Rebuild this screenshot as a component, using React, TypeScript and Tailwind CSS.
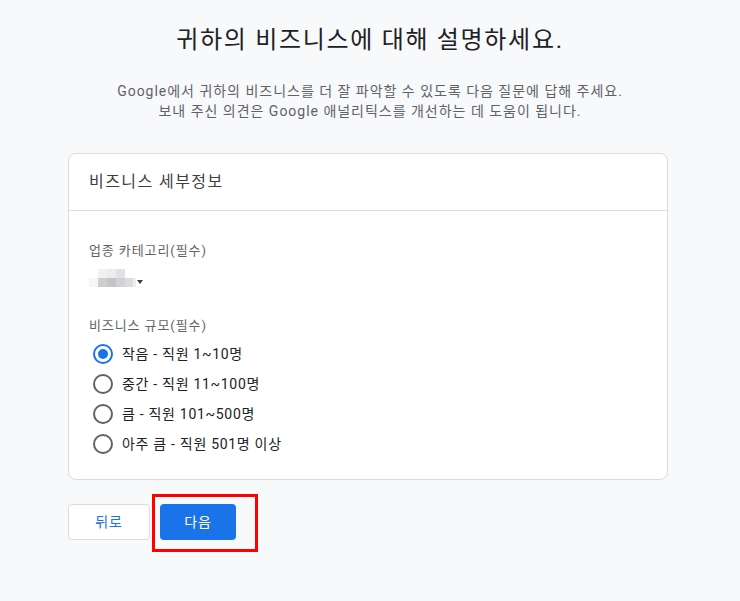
import React from "react";

const options = [
  "작음 - 직원 1~10명",
  "중간 - 직원 11~100명",
  "큼 - 직원 101~500명",
  "아주 큼 - 직원 501명 이상",
];

function Radio({ checked }: { checked: boolean }) {
  return (
    <span
      className={`flex h-[20px] w-[20px] items-center justify-center rounded-full border-2 ${
        checked ? "border-[#1a73e8]" : "border-[#5f6368]"
      }`}
    >
      {checked && <span className="h-[10px] w-[10px] rounded-full bg-[#1a73e8]" />}
    </span>
  );
}

export default function App() {
  return (
    <div
      className="min-h-[601px] w-[740px] bg-[#f8f9fa]"
      style={{ fontFamily: "Roboto, 'Noto Sans CJK KR', 'Noto Sans', sans-serif" }}
    >
      <div className="pt-[22px] text-center">
        <h1 className="text-[24px] leading-[36px] tracking-[0.07em] text-[#202124]">귀하의 비즈니스에 대해 설명하세요.</h1>
        <p className="mt-[23px] text-[14px] leading-[20px] tracking-[0.07em] text-[#5f6368]">
          Google에서 귀하의 비즈니스를 더 잘 파악할 수 있도록 다음 질문에 답해 주세요.
          <br />
          보내 주신 의견은 Google 애널리틱스를 개선하는 데 도움이 됩니다.
        </p>
      </div>

      <div className="mx-[68px] mt-[32px] w-[600px] rounded-[8px] border border-[#dadce0] bg-white">
        <div className="flex h-[57px] items-center border-b border-[#dadce0] px-[20px]">
          <span className="text-[16px] tracking-[0.09em] text-[#3c4043]">비즈니스 세부정보</span>
        </div>
        <div className="px-[20px] pb-[20px] pt-[30px]">
          <div className="text-[13px] leading-[20px] tracking-[0.07em] text-[#5f6368]">업종 카테고리(필수)</div>
          <div className="mt-[8px] flex h-[18px] items-end">
            <div className="flex flex-col">
              <div className="flex">
                <span className="h-[9px] w-[9px] bg-white" />
                <span className="h-[9px] w-[9px] bg-[#f1f1f3]" />
                <span className="h-[9px] w-[9px] bg-[#ececee]" />
                <span className="h-[9px] w-[9px] bg-[#e2e2e6]" />
              </div>
              <div className="flex">
                <span className="h-[9px] w-[9px] bg-[#f8f6f4]" />
                <span className="h-[9px] w-[9px] bg-[#cfcfd2]" />
                <span className="h-[9px] w-[9px] bg-[#c5c5c8]" />
                <span className="h-[9px] w-[9px] bg-[#d2d2d5]" />
                <span className="h-[9px] w-[8px] bg-[#dcdcdf]" />
                <span className="h-[9px] w-[3px] bg-[#ededef]" />
              </div>
            </div>
            <span className="mb-[3px] ml-[1px] h-0 w-0 border-l-[3px] border-r-[3px] border-t-[4px] border-l-transparent border-r-transparent border-t-[#3c4043]" />
          </div>

          <div className="mt-[29px] text-[13px] leading-[20px] tracking-[0.07em] text-[#5f6368]">비즈니스 규모(필수)</div>
          <div className="mt-[3px] flex flex-col">
            {options.map((o, i) => (
              <label key={o} className="flex h-[30px] items-center gap-[9px] pl-[4px]">
                <Radio checked={i === 0} />
                <span className="text-[14px] tracking-[0.05em] text-[#202124]">{o}</span>
              </label>
            ))}
          </div>
        </div>
      </div>

      <div className="ml-[68px] mt-[24px] flex items-center gap-[10px]">
        <button className="flex h-[36px] w-[82px] items-center justify-center rounded-[4px] border border-[#dadce0] bg-white text-[14px] tracking-[0.07em] text-[#1a73e8]">
          뒤로
        </button>
        <div className="relative">
          <button className="flex h-[36px] w-[76px] items-center justify-center rounded-[4px] bg-[#1a73e8] text-[14px] tracking-[0.07em] text-white">
            다음
          </button>
          <div className="pointer-events-none absolute left-[-8px] top-[-10px] h-[58px] w-[106px] border-[3px] border-[#ff0000]" />
        </div>
      </div>
    </div>
  );
}
